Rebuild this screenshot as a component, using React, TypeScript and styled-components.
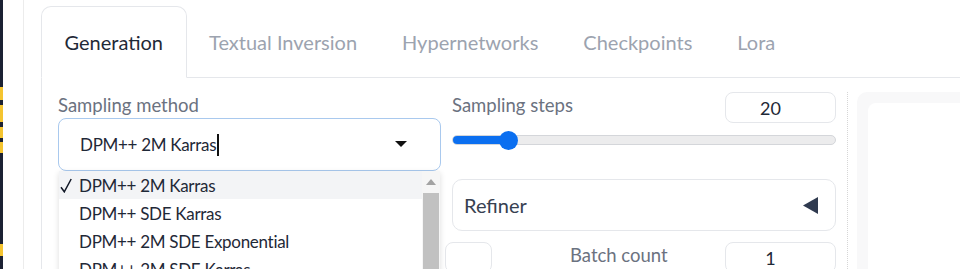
import styled, { createGlobalStyle } from "styled-components"

const GlobalStyle = createGlobalStyle`
  html, body {
    margin: 0;
    padding: 0;
    background: #ffffff;
  }
  body {
    font-family: Lato, "Noto Sans", sans-serif;
    color: #1f2937;
  }
`

const tabs = ["Generation", "Textual Inversion", "Hypernetworks", "Checkpoints", "Lora"]

const samplers = [
  "DPM++ 2M Karras",
  "DPM++ SDE Karras",
  "DPM++ 2M SDE Exponential",
  "DPM++ 2M SDE Karras",
]

type TabProps = { $active?: boolean }

const Tab = ({ label, active }: { label: string; active?: boolean }) => (
  <TabButton $active={active}>{label}</TabButton>
)

type SliderProps = { value: number; min: number; max: number }

const Slider = ({ value, min, max }: SliderProps) => {
  const pct = (value - min) / (max - min)
  const pos = `calc(10px + ${pct} * (100% - 20px))`
  return (
    <SliderWrap>
      <Track>
        <Fill style={{ width: pos }} />
      </Track>
      <Thumb style={{ left: pos }} />
    </SliderWrap>
  )
}

const CheckIcon = () => (
  <svg width="12" height="15" viewBox="0 0 12 15">
    <path d="M1 9.2 L4.3 13.8 L11.2 1" fill="none" stroke="#111827" strokeWidth="1.5" />
  </svg>
)

const SamplerDropdown = () => (
  <SelectField>
    <Label>Sampling method</Label>
    <Select>
      <SelectValue>
        DPM++ 2M Karras
        <Caret />
      </SelectValue>
      <svg width="12" height="7" viewBox="0 0 12 7">
        <path d="M0 0 L12 0 L6 6 Z" fill="#111" />
      </svg>
      <Menu>
        <MenuList>
          {samplers.map((s, i) => (
            <MenuItem key={s} $selected={i === 0}>
              <Check>{i === 0 && <CheckIcon />}</Check>
              {s}
            </MenuItem>
          ))}
        </MenuList>
        <ScrollBar>
          <ScrollArrow>
            <svg width="10" height="6" viewBox="0 0 10 6">
              <path d="M0 6 L10 6 L5 0 Z" fill="#a3a3a3" />
            </svg>
          </ScrollArrow>
          <ScrollThumb />
        </ScrollBar>
      </Menu>
    </Select>
  </SelectField>
)

export default function App() {
  return (
    <>
      <GlobalStyle />
      <Page>
        <Rail />
        <Gutter />
        <Main>
          <TabList>
            {tabs.map((t, i) => (
              <Tab key={t} label={t} active={i === 0} />
            ))}
            <TabFiller />
          </TabList>
          <Panel>
            <Settings>
              <Grid>
                <SamplerDropdown />
                <div>
                  <FieldHead>
                    <Label>Sampling steps</Label>
                    <NumberBox>20</NumberBox>
                  </FieldHead>
                  <Slider value={20} min={1} max={150} />
                </div>
                <div />
                <Accordion>
                  Refiner
                  <svg width="15" height="17" viewBox="0 0 15 17">
                    <path d="M15 0 L15 17 L0 8.5 Z" fill="#2f3a4f" />
                  </svg>
                </Accordion>
              </Grid>
              <BottomRow>
                <WidthGroup>
                  <NumberBox $small />
                </WidthGroup>
                <BatchGroup>
                  <Label>Batch count</Label>
                  <NumberBox>1</NumberBox>
                </BatchGroup>
              </BottomRow>
            </Settings>
            <Divider />
            <Output>
              <OutputInner />
            </Output>
          </Panel>
        </Main>
      </Page>
    </>
  )
}

const Page = styled.div`
  display: flex;
  height: 269px;
  overflow: hidden;
`

const Rail = styled.div`
  width: 3px;
  flex-shrink: 0;
  background: linear-gradient(
    to bottom,
    #1b2133 0 87px,
    #f4c430 87px 100px,
    #1b2133 100px 105px,
    #f4c430 105px 122px,
    #1b2133 122px 127px,
    #f4c430 127px 138px,
    #1b2133 138px 142px,
    #f4c430 142px 153px,
    #1b2133 153px 244px,
    #f4c430 244px 256px,
    #1b2133 256px
  );
`

const Gutter = styled.div`
  width: 20px;
  flex-shrink: 0;
  border-right: 1px solid #ececec;
`

const Main = styled.div`
  flex: 1;
  min-width: 0;
  padding: 6px 0 0 17px;
  display: flex;
  flex-direction: column;
`

const TabList = styled.div`
  display: flex;
  height: 72px;
  flex-shrink: 0;
`

const TabButton = styled.div<TabProps>`
  display: flex;
  align-items: center;
  padding: 0 22.5px;
  font-size: 20px;
  white-space: nowrap;
  color: ${(p) => (p.$active ? "#1f2937" : "#9ca3af")};
  border: 1px solid ${(p) => (p.$active ? "#e5e7eb" : "transparent")};
  border-bottom: 1px solid ${(p) => (p.$active ? "transparent" : "#e5e7eb")};
  border-radius: ${(p) => (p.$active ? "10px 10px 0 0" : "0")};
  border-left-width: ${(p) => (p.$active ? "1px" : "0")};
  border-right-width: ${(p) => (p.$active ? "1px" : "0")};
  border-top-width: ${(p) => (p.$active ? "1px" : "0")};
`

const TabFiller = styled.div`
  flex: 1;
  border-bottom: 1px solid #e5e7eb;
`

const Panel = styled.div`
  flex: 1;
  display: flex;
  border-left: 1px solid #e5e7eb;
  padding: 14px 0 0 16px;
`

const Settings = styled.div`
  width: 778px;
  flex-shrink: 0;
  display: flex;
  flex-direction: column;
`

const Grid = styled.div`
  display: grid;
  grid-template-columns: 383px 384px;
  column-gap: 11px;
  row-gap: 8px;
`

const Label = styled.div`
  font-size: 18.5px;
  line-height: 26px;
  color: #6b7280;
  white-space: nowrap;
`

const SelectField = styled.div`
  display: flex;
  flex-direction: column;
  position: relative;
  z-index: 2;
`

const Select = styled.div`
  position: relative;
  height: 53px;
  flex-shrink: 0;
  box-sizing: border-box;
  border: 1px solid #a9c9ee;
  border-radius: 8px;
  padding: 0 33px 0 21px;
  display: flex;
  align-items: center;
  justify-content: space-between;
`

const SelectValue = styled.div`
  display: flex;
  align-items: center;
  font-size: 17px;
  letter-spacing: -0.3px;
  color: #1f2937;
`

const Caret = styled.span`
  display: inline-block;
  width: 1.5px;
  height: 22px;
  margin-left: 1px;
  background: #111;
`

const Menu = styled.div`
  position: absolute;
  top: calc(100% + 1px);
  left: 0;
  width: 100%;
  height: 120px;
  display: flex;
  background: #ffffff;
  box-shadow: 0 2px 6px rgba(0, 0, 0, 0.14);
  overflow: hidden;
`

const MenuList = styled.div`
  flex: 1;
  display: flex;
  flex-direction: column;
`

const MenuItem = styled.div<{ $selected?: boolean }>`
  height: 28px;
  flex-shrink: 0;
  display: flex;
  align-items: center;
  font-size: 17px;
  letter-spacing: -0.3px;
  color: #1f2937;
  background: ${(p) => (p.$selected ? "#f3f4f6" : "transparent")};
`

const Check = styled.span`
  width: 20px;
  padding-left: 1px;
  box-sizing: border-box;
  display: flex;
  align-items: center;
`

const ScrollBar = styled.div`
  width: 18px;
  display: flex;
  flex-direction: column;
  background: #f6f6f6;
`

const ScrollArrow = styled.div`
  height: 22px;
  display: flex;
  align-items: center;
  justify-content: center;
`

const ScrollThumb = styled.div`
  flex: 1;
  margin: 0 1px;
  background: #c1c1c1;
`

const FieldHead = styled.div`
  display: flex;
  justify-content: space-between;
  align-items: flex-start;
`

const NumberBox = styled.div<{ $small?: boolean }>`
  width: ${(p) => (p.$small ? "47px" : "111px")};
  height: 31px;
  flex-shrink: 0;
  box-sizing: border-box;
  border: 1px solid #e5e7eb;
  border-radius: 8px;
  padding-right: ${(p) => (p.$small ? "0" : "20px")};
  display: flex;
  align-items: center;
  justify-content: center;
  font-size: 18px;
  color: #1f2937;
  overflow: hidden;
`

const SliderWrap = styled.div`
  position: relative;
  height: 20px;
  margin-top: 7px;
  display: flex;
  align-items: center;
`

const Track = styled.div`
  position: relative;
  flex: 1;
  height: 10px;
  box-sizing: border-box;
  border: 1px solid #d4d6da;
  border-radius: 5px;
  background: #ececed;
  overflow: hidden;
`

const Fill = styled.div`
  height: 100%;
  background: #0b6ff0;
`

const Thumb = styled.div`
  position: absolute;
  top: 1px;
  width: 19px;
  height: 19px;
  margin-left: -9px;
  border-radius: 50%;
  background: #0b6ff0;
`

const Accordion = styled.div`
  height: 52px;
  box-sizing: border-box;
  border: 1px solid #e5e7eb;
  border-radius: 10px;
  padding: 0 17px 0 11px;
  display: flex;
  align-items: center;
  justify-content: space-between;
  font-size: 20px;
  color: #374151;
`

const BottomRow = styled.div`
  display: flex;
  margin-top: 11px;
`

const WidthGroup = styled.div`
  width: 434px;
  display: flex;
  justify-content: flex-end;
`

const BatchGroup = styled.div`
  flex: 1;
  margin-left: 78px;
  display: flex;
  justify-content: space-between;
  align-items: flex-start;
`

const Divider = styled.div`
  width: 0;
  margin: 0 9px 0 11px;
  border-left: 1px dotted #d6d6d6;
`

const Output = styled.div`
  flex: 1;
  background: #f8f8f9;
  border-radius: 10px 0 0 0;
  padding: 11px 0 0 11px;
  display: flex;
`

const OutputInner = styled.div`
  flex: 1;
  background: #ffffff;
  border-radius: 8px 0 0 0;
`
